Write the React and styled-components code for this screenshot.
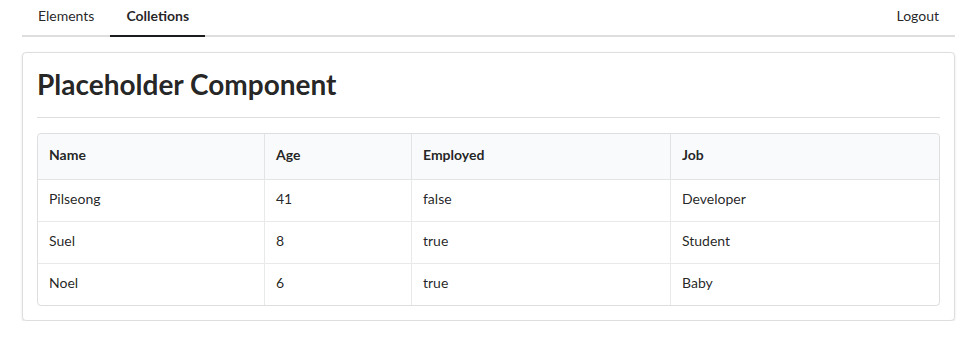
import React from "react";
import styled, { createGlobalStyle } from "styled-components";

const Global = createGlobalStyle`
  html, body { margin: 0; padding: 0; background: #fff; }
  body {
    font-family: Lato, "Helvetica Neue", Arial, sans-serif;
    font-size: 14px;
    line-height: 1.4285em;
    color: rgba(0,0,0,.87);
  }
`;

const Container = styled.div`
  margin: 0 23px 0 22px;
`;

const Menu = styled.nav`
  display: flex;
  border-bottom: 2px solid rgba(34,36,38,.15);
  margin-bottom: 15px;
`;

const Item = styled.a`
  display: block;
  font-size: 14px;
  line-height: 1;
  padding: 9px 16px 12px;
  margin-bottom: -2px;
  border-bottom: 2px solid ${p => (p.$active ? "#1b1c1d" : "transparent")};
  color: rgba(0,0,0,.87);
  font-weight: ${p => (p.$active ? 700 : 400)};
  margin-left: ${p => (p.$right ? "auto" : "0")};
  cursor: pointer;
`;

const Segment = styled.section`
  border: 1px solid rgba(34,36,38,.15);
  border-radius: 4px;
  box-shadow: 0 1px 2px 0 rgba(34,36,38,.15);
  padding: 14px;
`;

const Title = styled.h1`
  margin: 0 0 15px;
  font-size: 28px;
  font-weight: 700;
  line-height: 34px;
  padding: 0 0 16px;
  border-bottom: 1px solid rgba(34,36,38,.15);
  color: rgba(0,0,0,.87);
`;

const Table = styled.table`
  width: 100%;
  border-collapse: separate;
  border-spacing: 0;
  border: 1px solid rgba(34,36,38,.15);
  border-radius: 4px;
  table-layout: fixed;
`;

const Th = styled.th`
  background: #f9fafb;
  text-align: left;
  font-weight: 700;
  padding: 11px 11px 14px;
  line-height: 20px;
  border-bottom: 1px solid rgba(34,36,38,.1);
  border-left: ${p => (p.$first ? "none" : "1px solid rgba(34,36,38,.1)")};
  color: rgba(0,0,0,.87);
  &:first-child { border-top-left-radius: 4px; }
  &:last-child { border-top-right-radius: 4px; }
`;

const Td = styled.td`
  padding: 9px 11px 12px;
  line-height: 20px;
  border-top: ${p => (p.$firstRow ? "none" : "1px solid rgba(34,36,38,.1)")};
  border-left: ${p => (p.$first ? "none" : "1px solid rgba(34,36,38,.1)")};
`;

const cols = [
  { key: "name", label: "Name", width: 226 },
  { key: "age", label: "Age", width: 147 },
  { key: "employed", label: "Employed", width: 259 },
  { key: "job", label: "Job", width: 269 },
];

const rows = [
  { name: "Pilseong", age: 41, employed: "false", job: "Developer" },
  { name: "Suel", age: 8, employed: "true", job: "Student" },
  { name: "Noel", age: 6, employed: "true", job: "Baby" },
];

export default function App() {
  return (
    <>
      <Global />
      <Container>
        <Menu>
          <Item>Elements</Item>
          <Item $active>Colletions</Item>
          <Item $right>Logout</Item>
        </Menu>
        <Segment>
          <Title>Placeholder Component</Title>
          <Table>
            <colgroup>
              {cols.map(c => (
                <col key={c.key} style={{ width: c.width }} />
              ))}
            </colgroup>
            <thead>
              <tr>
                {cols.map((c, i) => (
                  <Th key={c.key} $first={i === 0}>{c.label}</Th>
                ))}
              </tr>
            </thead>
            <tbody>
              {rows.map((r, ri) => (
                <tr key={r.name}>
                  {cols.map((c, i) => (
                    <Td key={c.key} $first={i === 0} $firstRow={ri === 0}>
                      {String(r[c.key])}
                    </Td>
                  ))}
                </tr>
              ))}
            </tbody>
          </Table>
        </Segment>
      </Container>
    </>
  );
}
